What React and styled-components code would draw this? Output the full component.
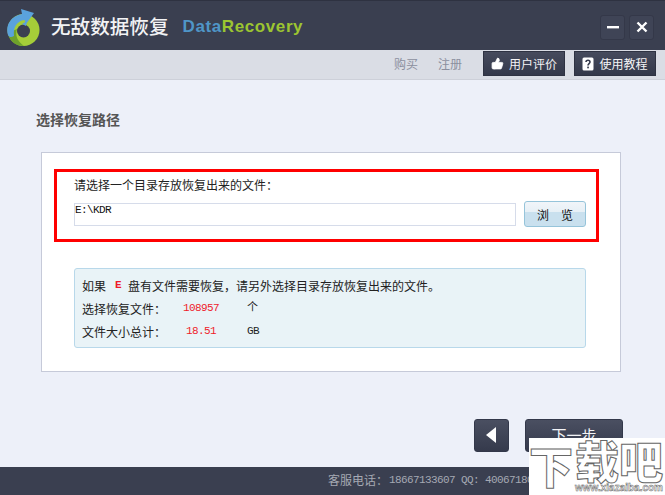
import React from 'react'
import styled, { createGlobalStyle } from 'styled-components'
import { ThumbsUp } from 'lucide-react'

const cjk = '"Noto Sans CJK SC", "Liberation Sans", sans-serif'
const mono = '"Liberation Mono", "Noto Sans CJK SC", monospace'

const Global = createGlobalStyle`
  html, body { margin: 0; padding: 0; background: #edf0f9; }
  * { box-sizing: border-box; }
`

const Frame = styled.div`
  position: relative;
  width: 665px;
  height: 495px;
  overflow: hidden;
  display: flex;
  flex-direction: column;
  background: #edf0f9;
  font-family: ${cjk};
  font-size: 12px;
  color: #222;
`

const Header = styled.header`
  height: 50px;
  display: flex;
  align-items: center;
  padding-left: 5px;
  background: #3a3f50;
  border-top: 1px solid #2e3241;
`

const Logo = styled.svg`
  width: 38px;
  height: 40px;
  margin-top: 2px;
`

const AppName = styled.div`
  margin-left: 8px;
  font-size: 19.6px;
  font-weight: 500;
  line-height: 24px;
  color: #f2f3f5;
`

const Brand = styled.div`
  margin-left: 14px;
  margin-top: 2px;
  font-family: "Liberation Sans", sans-serif;
  font-size: 17px;
  font-weight: 700;
  letter-spacing: 0.6px;
  color: #4f96c8;
  span { color: #9cc531; }
`

const WindowButtons = styled.div`
  margin-left: auto;
  margin-right: 11px;
  margin-top: 3px;
  display: flex;
  gap: 4px;
`

const WindowButton = styled.button`
  width: 25px;
  height: 25px;
  padding: 0;
  display: flex;
  align-items: center;
  justify-content: center;
  background: #3f4456;
  border: 1px solid #343849;
  border-radius: 3px;
`

const SubBar = styled.div`
  height: 30px;
  display: flex;
  align-items: center;
  justify-content: flex-end;
  padding-right: 9px;
  background: #dadde5;
  border-bottom: 1px solid #cdd0d9;
`

const SubLink = styled.a`
  margin-right: 20px;
  margin-top: -1px;
  color: #8b8f9e;
  line-height: 16px;
`

const SubButton = styled.button`
  width: 82px;
  height: 25px;
  margin-left: ${({ $gap }) => $gap}px;
  margin-top: -2px;
  padding: 0;
  display: flex;
  align-items: center;
  justify-content: center;
  gap: 5px;
  font-family: ${cjk};
  font-size: 12px;
  color: #f4f4f6;
  background: linear-gradient(#464b5d, #33384a);
  border: 1px solid #2e3242;
`

const Main = styled.main`
  flex: 1;
  display: flex;
  flex-direction: column;
  padding: 0 42px 0 41px;
`

const Title = styled.h2`
  margin: 29px 0 0 -5px;
  height: 20px;
  font-size: 14px;
  font-weight: 700;
  line-height: 20px;
  color: #555;
`

const Card = styled.section`
  margin-top: 23px;
  width: 580px;
  height: 220px;
  padding: 16px 0 0 12px;
  background: #fff;
  border: 1px solid #c6cad9;
`

const Highlight = styled.div`
  width: 545px;
  height: 73px;
  padding: 4px 0 0 17px;
  border: 3px solid #f00;
`

const Label = styled.div`
  height: 17px;
  line-height: 17px;
`

const PathRow = styled.div`
  margin-top: 8px;
  display: flex;
  align-items: flex-start;
  gap: 8px;
`

const PathInput = styled.div`
  width: 442px;
  height: 23px;
  margin-top: 2px;
  font-family: ${mono};
  font-size: 11px;
  letter-spacing: -0.6px;
  line-height: 13px;
  color: #111;
  background: #fff;
  border: 1px solid #d6dcea;
`

const Browse = styled.button`
  width: 62px;
  height: 26px;
  padding: 0;
  font-family: ${cjk};
  font-size: 12px;
  letter-spacing: 12px;
  text-indent: 12px;
  color: #111;
  background: linear-gradient(#f1f5f9 0, #e7f0f6 40%, #c9e0ee 42%, #c9e0ee 100%);
  border: 1px solid #96c4da;
  border-radius: 3px;
`

const Info = styled.div`
  width: 512px;
  height: 80px;
  margin: 26px 0 0 20px;
  padding: 6px 0 0 7px;
  background: #e9f3f7;
  border: 1px solid #b8d8ea;
  border-radius: 3px;
  line-height: 21px;
`

const InfoRow = styled.div`
  display: flex;
  height: 23px;
`

const InfoName = styled.span`
  width: 101px;
`

const Value = styled.span`
  width: ${({ $w }) => $w}px;
  font-family: ${mono};
  font-size: 11px;
  letter-spacing: -0.6px;
  text-align: center;
  color: #ef1a2a;
`

const Drive = styled(Value)`
  width: auto;
  margin: 0 7px 0 9px;
  font-weight: 700;
`

const Unit = styled.span`
  margin-left: 28px;
  font-family: ${mono};
  font-size: 11px;
  letter-spacing: -0.6px;
`

const Actions = styled.div`
  margin-top: 47px;
  display: flex;
  justify-content: flex-end;
  gap: 16px;
`

const NavButton = styled.button`
  width: ${({ $w }) => $w}px;
  height: 33px;
  padding: 0 0 2px;
  display: flex;
  align-items: center;
  justify-content: center;
  font-family: ${cjk};
  font-size: 15px;
  color: #f2f3f6;
  background: linear-gradient(#4a4f61, #353a4c);
  border: 1px solid #33384a;
  border-radius: 3px;
`

const Footer = styled.footer`
  height: 28px;
  padding: 0 0 3px 328px;
  display: flex;
  align-items: center;
  gap: 1px;
  white-space: nowrap;
  color: #a5a9b3;
  background: #3a3f50;
`

const Numbers = styled.span`
  font-family: ${mono};
  font-size: 11px;
  letter-spacing: -0.6px;
`

// site stamp lying over the bottom right corner
const Watermark = styled.div`
  position: absolute;
  right: 0;
  bottom: 0;
  width: 136px;
  height: 57px;
  display: flex;
  overflow: hidden;
  background: #fff;
`

const MarkBig = styled.div`
  flex: none;
  width: 45px;
  font-size: 44px;
  font-weight: 900;
  line-height: 54px;
  color: #fff;
  -webkit-text-stroke: 1px #666;
`

const MarkSide = styled.div`
  flex: none;
  width: 91px;
  display: flex;
  flex-direction: column;
  align-items: flex-end;
  padding-right: 2px;
`

const MarkTitle = styled.div`
  height: 44px;
  font-size: 44px;
  font-weight: 900;
  line-height: 44px;
  white-space: nowrap;
  color: #fff;
  -webkit-text-stroke: 1px #666;
`

const MarkUrl = styled.div`
  font-family: "Liberation Sans", sans-serif;
  font-size: 10px;
  font-weight: 700;
  line-height: 11px;
  white-space: nowrap;
  color: #fff;
  -webkit-text-stroke: 0.5px #666;
`

function AppLogo() {
  return (
    <Logo viewBox="0 0 38 40">
      <circle cx="18.5" cy="23" r="16" fill="#a5cd39" />
      <path d="M3 26 C5 36 12 39 19 39 C12 34 10 28 12 22 Z" fill="#6ea12c" />
      <path d="M3 28 C0 17 7 9 17 7 L16 2 L29 6 L21 17 L19.5 13 C12 14 8 20 9 29 C6 31 4 30 3 28 Z" fill="#5aa2dc" />
      <circle cx="18.5" cy="24" r="6.5" fill="#3a3f50" />
      <path d="M17 17 L22 14 L21 19 Z" fill="#5aa2dc" />
    </Logo>
  )
}

export default function App() {
  return (
    <Frame>
      <Global />
      <Header>
        <AppLogo />
        <AppName>无敌数据恢复</AppName>
        <Brand>Data<span>Recovery</span></Brand>
        <WindowButtons>
          <WindowButton aria-label="最小化">
            <svg width="12" height="12" viewBox="0 0 12 12"><rect x="0" y="5" width="12" height="2.4" fill="#fff" /></svg>
          </WindowButton>
          <WindowButton aria-label="关闭">
            <svg width="12" height="12" viewBox="0 0 12 12"><path d="M1.5 1.5 L10.5 10.5 M10.5 1.5 L1.5 10.5" stroke="#fff" strokeWidth="2.4" /></svg>
          </WindowButton>
        </WindowButtons>
      </Header>
      <SubBar>
        <SubLink>购买</SubLink>
        <SubLink>注册</SubLink>
        <SubButton $gap={1}>
          <ThumbsUp size={13} color="#fff" fill="#fff" strokeWidth={1.5} />
          用户评价
        </SubButton>
        <SubButton $gap={9}>
          <svg width="12" height="14" viewBox="0 0 12 14">
            <rect x="0.5" y="0.5" width="11" height="13" rx="1.5" fill="#fff" />
            <path d="M4 5 C4 2.6 8 2.6 8 5 C8 6.6 6 6.6 6 8.4" fill="none" stroke="#353a4c" strokeWidth="1.6" />
            <rect x="5.2" y="9.6" width="1.7" height="1.7" fill="#353a4c" />
          </svg>
          使用教程
        </SubButton>
      </SubBar>
      <Main>
        <Title>选择恢复路径</Title>
        <Card>
          <Highlight>
            <Label>请选择一个目录存放恢复出来的文件：</Label>
            <PathRow>
              <PathInput>E:\KDR</PathInput>
              <Browse>浏览</Browse>
            </PathRow>
          </Highlight>
          <Info>
            <InfoRow>
              如果<Drive>E</Drive>盘有文件需要恢复，请另外选择目录存放恢复出来的文件。
            </InfoRow>
            <InfoRow>
              <InfoName>选择恢复文件：</InfoName>
              <Value $w={36}>108957</Value>
              <Unit>个</Unit>
            </InfoRow>
            <InfoRow>
              <InfoName>文件大小总计：</InfoName>
              <Value $w={36}>18.51</Value>
              <Unit>GB</Unit>
            </InfoRow>
          </Info>
        </Card>
        <Actions>
          <NavButton $w={35} aria-label="上一步">
            <svg width="11" height="16" viewBox="0 0 11 16"><path d="M10 0 L10 16 L0 8 Z" fill="#fff" /></svg>
          </NavButton>
          <NavButton $w={98}>下一步</NavButton>
        </Actions>
      </Main>
      <Footer>
        客服电话：<Numbers>18667133607 QQ: 400671806</Numbers>
      </Footer>
      <Watermark>
        <MarkBig>下</MarkBig>
        <MarkSide>
          <MarkTitle>载吧</MarkTitle>
          <MarkUrl>www.xiazaiba.com</MarkUrl>
        </MarkSide>
      </Watermark>
    </Frame>
  )
}
